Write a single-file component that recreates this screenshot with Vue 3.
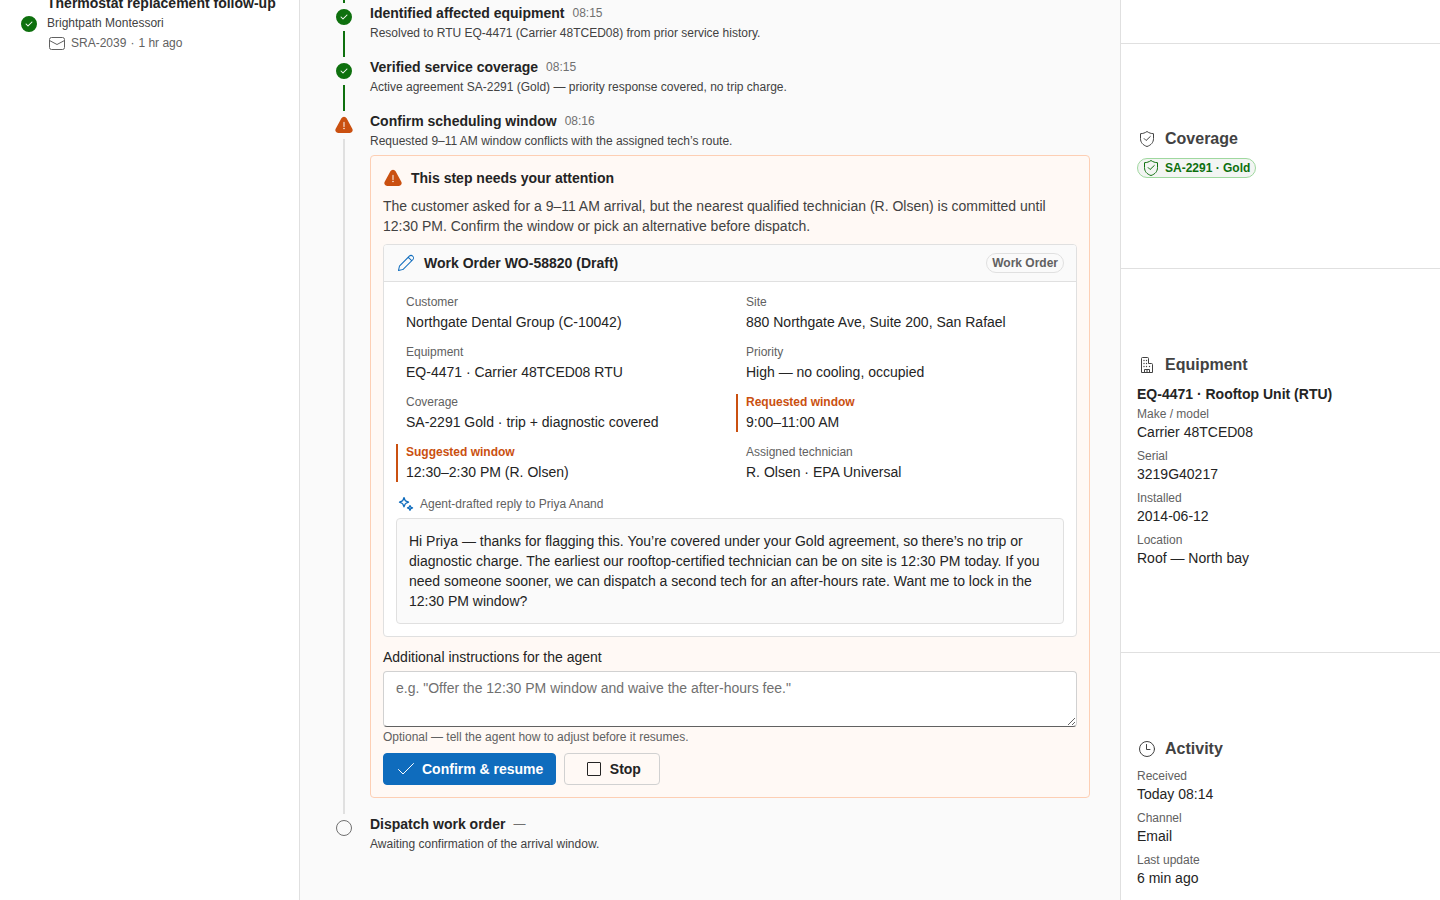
<script setup>
import { ref } from 'vue'

const instructions = ref('')

const fields = [
  { label: 'Customer', value: 'Northgate Dental Group (C-10042)' },
  { label: 'Site', value: '880 Northgate Ave, Suite 200, San Rafael' },
  { label: 'Equipment', value: 'EQ-4471 · Carrier 48TCED08 RTU' },
  { label: 'Priority', value: 'High — no cooling, occupied' },
  { label: 'Coverage', value: 'SA-2291 Gold · trip + diagnostic covered' },
  { label: 'Requested window', value: '9:00–11:00 AM', flagged: true },
  { label: 'Suggested window', value: '12:30–2:30 PM (R. Olsen)', flagged: true },
  { label: 'Assigned technician', value: 'R. Olsen · EPA Universal' },
]

const doneSteps = [
  {
    title: 'Identified affected equipment',
    time: '08:15',
    text: 'Resolved to RTU EQ-4471 (Carrier 48TCED08) from prior service history.',
  },
  {
    title: 'Verified service coverage',
    time: '08:15',
    text: 'Active agreement SA-2291 (Gold) — priority response covered, no trip charge.',
  },
]

const equipment = [
  { label: 'Make / model', value: 'Carrier 48TCED08' },
  { label: 'Serial', value: '3219G40217' },
  { label: 'Installed', value: '2014-06-12' },
  { label: 'Location', value: 'Roof — North bay' },
]

const activity = [
  { label: 'Received', value: 'Today 08:14' },
  { label: 'Channel', value: 'Email' },
  { label: 'Last update', value: '6 min ago' },
]
</script>

<template>
  <svg class="defs" aria-hidden="true">
    <symbol id="i-done" viewBox="0 0 20 20">
      <path fill="currentColor" d="M10 2a8 8 0 1 1 0 16 8 8 0 0 1 0-16Zm3.36 5.65a.5.5 0 0 0-.64-.06l-.07.06L9 11.3 7.35 9.65l-.07-.06a.5.5 0 0 0-.7.7l.07.07 2 2 .07.06c.17.11.4.11.56 0l.07-.06 4-4 .07-.08a.5.5 0 0 0-.06-.63Z" />
    </symbol>
    <symbol id="i-warning" viewBox="0 0 20 20">
      <path fill="currentColor" fill-rule="evenodd" d="M7.400 3.300a3 3 0 0 1 5.200 0l5.700 10.400A2.900 2.900 0 0 1 15.800 18H4.200a2.900 2.900 0 0 1-2.500-4.300L7.400 3.300ZM10.500 7.300a.5.5 0 0 0-1 0v4.200a.5.5 0 0 0 1 0V7.300Zm.25 6.250a.75.75 0 1 0-1.500 0 .75.75 0 0 0 1.500 0Z" />
    </symbol>
    <symbol id="i-shield" viewBox="0 0 20 20">
      <path fill="none" stroke="currentColor" stroke-linejoin="round" d="M10 2.500c1.900 1.400 4.100 2.100 6.500 2.200v4.800c0 3.900-2.300 6.600-6.500 8-4.200-1.400-6.500-4.100-6.500-8V4.700C5.900 4.600 8.100 3.900 10 2.500Z" />
      <path fill="none" stroke="currentColor" stroke-linecap="round" stroke-linejoin="round" d="m7.200 9.600 1.900 1.900 4.200-4" />
    </symbol>
    <symbol id="i-building" viewBox="0 0 20 20">
      <path fill="none" stroke="currentColor" stroke-linejoin="round" d="M4.500 17.500v-14a1 1 0 0 1 1-1h5a1 1 0 0 1 1 1v5h3a1 1 0 0 1 1 1v8ZM7.500 17.500v-3h5v3M10 14.500v3" />
      <g fill="currentColor">
        <circle cx="7" cy="5.500" r=".7" /><circle cx="9.500" cy="5.500" r=".7" />
        <circle cx="7" cy="8.500" r=".7" /><circle cx="9.500" cy="8.500" r=".7" />
        <circle cx="7" cy="11.500" r=".7" /><circle cx="9.500" cy="11.500" r=".7" />
        <circle cx="12.500" cy="11.500" r=".7" />
      </g>
    </symbol>
    <symbol id="i-clock" viewBox="0 0 20 20">
      <g fill="none" stroke="currentColor" stroke-linecap="round" stroke-linejoin="round">
        <circle cx="10" cy="10" r="7.500" />
        <path d="M9.500 5.500v5H13" />
      </g>
    </symbol>
    <symbol id="i-mail" viewBox="0 0 20 20">
      <g fill="none" stroke="currentColor">
        <rect x="2.500" y="4.500" width="15" height="12" rx="2" />
        <path d="m2.500 7.500 7.500 4 7.500-4" />
      </g>
    </symbol>
    <symbol id="i-edit" viewBox="0 0 20 20">
      <path fill="currentColor" fill-rule="evenodd" d="M17.180 2.930a2.970 2.970 0 0 0-4.260-.06l-9.370 9.380c-.33.33-.57.74-.69 1.200l-.84 3.910a.5.5 0 0 0 .6.6l3.900-.84c.46-.12.87-.36 1.200-.69l9.400-9.380c1.130-1.130 1.150-2.960.06-4.120Zm-3.550.65a1.970 1.970 0 1 1 2.800 2.800l-.68.66-2.800-2.790.68-.67Zm-1.380 1.380 2.800 2.800-8 7.990c-.2.2-.46.35-.74.43l-3.150.66.67-3.150c.08-.28.23-.54.43-.74l8-7.990Z" />
    </symbol>
    <symbol id="i-sparkle" viewBox="0 0 20 20">
      <g fill="none" stroke="currentColor" stroke-width="1.300" stroke-linejoin="round">
        <path d="M8 3.600 9.200 6.500q.1.300.4.400L12.500 8.200 9.600 9.500q-.3.100-.4.400L8 12.800 6.800 9.900q-.1-.3-.4-.4L3.500 8.200 6.400 6.900q.3-.1.400-.4Z" />
        <path d="m14 11.600.8 1.600 1.700.7-1.700.7-.8 1.700-.8-1.700-1.700-.7 1.700-.7Z" />
      </g>
    </symbol>
    <symbol id="i-check" viewBox="0 0 20 20">
      <path fill="none" stroke="currentColor" stroke-linecap="round" stroke-linejoin="round" d="M2.500 10.500 7 15 17.500 4.500" />
    </symbol>
    <symbol id="i-stop" viewBox="0 0 20 20">
      <rect x="3.500" y="3.500" width="13" height="13" rx=".5" fill="none" stroke="currentColor" />
    </symbol>
    <symbol id="i-circle" viewBox="0 0 20 20">
      <circle cx="10" cy="10" r="7.500" fill="none" stroke="currentColor" />
    </symbol>
  </svg>

  <div class="app">
    <aside class="inbox" aria-label="Requests">
      <article class="request">
        <svg class="icon green"><use href="#i-done" /></svg>
        <div class="request-text">
          <strong class="title">Thermostat replacement follow-up</strong>
          <span class="small">Brightpath Montessori</span>
          <span class="meta">
            <svg class="icon"><use href="#i-mail" /></svg>
            <span>SRA-2039</span><span>·</span><span>1 hr ago</span>
          </span>
        </div>
      </article>
    </aside>

    <main class="main">
      <div class="timeline">
        <div class="step previous"><div class="rail"><span class="line green-line"></span></div></div>

        <section v-for="s in doneSteps" :key="s.title" class="step">
          <div class="rail">
            <svg class="icon green"><use href="#i-done" /></svg>
            <span class="line green-line"></span>
          </div>
          <div class="step-body">
            <div class="step-head"><strong class="title">{{ s.title }}</strong><time class="time">{{ s.time }}</time></div>
            <p class="small">{{ s.text }}</p>
          </div>
        </section>

        <section class="step">
          <div class="rail">
            <svg class="icon orange"><use href="#i-warning" /></svg>
            <span class="line"></span>
          </div>
          <div class="step-body">
            <div class="step-head"><strong class="title">Confirm scheduling window</strong><time class="time">08:16</time></div>
            <p class="small">Requested 9–11 AM window conflicts with the assigned tech’s route.</p>

            <div class="attention">
              <div class="row">
                <svg class="icon orange"><use href="#i-warning" /></svg>
                <strong class="title">This step needs your attention</strong>
              </div>
              <p class="explain">The customer asked for a 9–11 AM arrival, but the nearest qualified technician (R. Olsen) is committed until 12:30 PM. Confirm the window or pick an alternative before dispatch.</p>

              <div class="order">
                <header class="row order-head">
                  <svg class="icon blue"><use href="#i-edit" /></svg>
                  <strong class="title">Work Order WO-58820 (Draft)</strong>
                  <span class="badge">Work Order</span>
                </header>
                <div class="order-body">
                  <dl class="fields">
                    <div v-for="f in fields" :key="f.label" class="field" :class="{ flagged: f.flagged }">
                      <dt>{{ f.label }}</dt>
                      <dd>{{ f.value }}</dd>
                    </div>
                  </dl>
                  <div class="draft">
                    <div class="draft-label">
                      <svg class="icon blue"><use href="#i-sparkle" /></svg>
                      Agent-drafted reply to Priya Anand
                    </div>
                    <p class="reply">Hi Priya — thanks for flagging this. You’re covered under your Gold agreement, so there’s no trip or diagnostic charge. The earliest our rooftop-certified technician can be on site is 12:30 PM today. If you need someone sooner, we can dispatch a second tech for an after-hours rate. Want me to lock in the 12:30 PM window?</p>
                  </div>
                </div>
              </div>

              <div class="instructions">
                <label for="instructions">Additional instructions for the agent</label>
                <textarea id="instructions" v-model="instructions" aria-describedby="hint" placeholder="e.g. &quot;Offer the 12:30 PM window and waive the after-hours fee.&quot;"></textarea>
                <span id="hint" class="hint">Optional — tell the agent how to adjust before it resumes.</span>
              </div>

              <div class="row">
                <button type="button" class="button primary"><svg class="icon"><use href="#i-check" /></svg>Confirm &amp; resume</button>
                <button type="button" class="button"><svg class="icon"><use href="#i-stop" /></svg>Stop</button>
              </div>
            </div>
          </div>
        </section>

        <section class="step">
          <div class="rail"><svg class="icon gray"><use href="#i-circle" /></svg></div>
          <div class="step-body">
            <div class="step-head"><strong class="title">Dispatch work order</strong><span class="time">—</span></div>
            <p class="small">Awaiting confirmation of the arrival window.</p>
          </div>
        </section>
      </div>
    </main>

    <aside class="context" aria-label="Context">
      <section class="panel coverage">
        <h2><svg class="icon"><use href="#i-shield" /></svg>Coverage</h2>
        <span class="badge success"><svg class="icon"><use href="#i-shield" /></svg><span>SA-2291 · Gold</span></span>
      </section>
      <section class="panel">
        <h2><svg class="icon"><use href="#i-building" /></svg>Equipment</h2>
        <div class="unit">
          <strong class="title">EQ-4471 · Rooftop Unit (RTU)</strong>
          <dl class="facts">
            <div v-for="e in equipment" :key="e.label"><dt>{{ e.label }}</dt><dd>{{ e.value }}</dd></div>
          </dl>
        </div>
      </section>
      <section class="panel">
        <h2><svg class="icon"><use href="#i-clock" /></svg>Activity</h2>
        <dl class="facts">
          <div v-for="a in activity" :key="a.label"><dt>{{ a.label }}</dt><dd>{{ a.value }}</dd></div>
        </dl>
      </section>
    </aside>
  </div>
</template>

<style>
body { margin: 0; background: #fafafa; }
</style>

<style scoped>
* { box-sizing: border-box; }
.defs { position: absolute; width: 0; height: 0; }
.app {
  display: grid;
  grid-template-columns: 300px minmax(0, 1fr) 320px;
  height: 100vh;
  overflow: hidden;
  font: 14px/20px "Liberation Sans", Arial, sans-serif;
  color: #242424;
}
p, dl, dd, h2 { margin: 0; }
.icon { display: block; flex: none; width: 20px; height: 20px; }
.green { color: #0e700e; }
.orange { color: #ca5010; }
.blue { color: #0f6cbd; }
.gray { color: #707070; }
.title { font-weight: 600; }
.small { font-size: 12px; line-height: 16px; color: #424242; }
.row { display: flex; align-items: center; gap: 8px; }

.inbox { min-height: 0; background: #fff; border-right: 1px solid #e0e0e0; }
.request { display: flex; align-items: center; gap: 8px; margin-top: -7px; padding: 0 19px; }
.request-text { display: flex; flex-direction: column; gap: 2px; padding-bottom: 2px; white-space: nowrap; }
.meta { display: flex; align-items: center; gap: 4px; font-size: 12px; color: #616161; }

.main { min-height: 0; background: #fafafa; padding: 0 24px; }
.timeline { max-width: 760px; margin: 0 auto; }
.step { display: grid; grid-template-columns: 28px minmax(0, 1fr); column-gap: 12px; }
.previous { height: 3px; }
.rail { display: flex; flex-direction: column; align-items: center; gap: 4px; padding-top: 4px; }
.previous .rail { padding-top: 0; }
.line { flex: 1; width: 2px; background: #e0e0e0; }
.green-line { background: #0e700e; }
.step-body { display: flex; flex-direction: column; gap: 2px; padding-bottom: 16px; }
.step-head { display: flex; align-items: center; gap: 8px; }
.time { font-size: 12px; color: #707070; }

.attention {
  display: flex;
  flex-direction: column;
  gap: 8px;
  margin-top: 4px;
  padding: 12px;
  background: #fff9f5;
  border: 1px solid #fdcfb4;
  border-radius: 4px;
}
.explain { color: #424242; }
.order { background: #fff; border: 1px solid #e0e0e0; border-radius: 4px; overflow: hidden; }
.order-head { padding: 8px 12px; background: #fafafa; border-bottom: 1px solid #e0e0e0; }
.badge {
  display: inline-flex;
  align-items: center;
  height: 20px;
  padding: 0 5px;
  border: 1px solid #e0e0e0;
  border-radius: 10px;
  font-size: 12px;
  line-height: 16px;
  font-weight: 600;
  color: #616161;
}
.order-head .badge { margin-left: auto; }
.order-body { display: flex; flex-direction: column; gap: 12px; padding: 12px; }
.fields { display: grid; grid-template-columns: 1fr 1fr; gap: 12px; }
.field { display: flex; flex-direction: column; gap: 2px; padding-left: 8px; border-left: 2px solid transparent; }
dt { font-size: 12px; line-height: 16px; color: #616161; }
.flagged { border-color: #ca5010; }
.flagged dt { color: #ca5010; font-weight: 600; }
.draft { display: flex; flex-direction: column; gap: 4px; }
.draft-label { display: flex; align-items: center; gap: 4px; font-size: 12px; color: #616161; }
.reply { padding: 12px; background: #fafafa; border: 1px solid #e0e0e0; border-radius: 4px; }

.instructions { display: flex; flex-direction: column; }
.instructions label { padding: 2px 0 4px; }
textarea {
  display: block;
  width: 100%;
  height: 56px;
  padding: 6px 12px;
  font: inherit;
  color: inherit;
  background: #fff;
  border: 1px solid #d1d1d1;
  border-bottom-color: #616161;
  border-radius: 4px;
  resize: vertical;
}
textarea::placeholder { color: #707070; }
.hint { margin-top: 2px; font-size: 12px; line-height: 16px; color: #616161; }
.button {
  display: inline-flex;
  align-items: center;
  justify-content: center;
  gap: 6px;
  min-width: 96px;
  height: 32px;
  padding: 0 12px;
  font: inherit;
  font-weight: 600;
  color: #242424;
  background: transparent;
  border: 1px solid #d1d1d1;
  border-radius: 4px;
}
.primary { color: #fff; background: #0f6cbd; border-color: #0f6cbd; }

.context { min-height: 0; padding-top: 43px; background: #fff; border-left: 1px solid #e0e0e0; }
.panel {
  display: flex;
  flex-direction: column;
  align-items: flex-start;
  gap: 8px;
  padding: 85px 16px 84px;
  border-top: 1px solid #e0e0e0;
}
.coverage { padding-top: 84px; padding-bottom: 90px; }
.panel h2 { display: flex; align-items: center; gap: 8px; font-size: 16px; line-height: 22px; font-weight: 600; color: #424242; }
.success { gap: 4px; padding: 0 5px 0 3px; color: #0e700e; background: #f3f5f3; border-color: #9fd89f; }
.unit { display: flex; flex-direction: column; gap: 2px; }
.facts { display: flex; flex-direction: column; gap: 6px; }
</style>
